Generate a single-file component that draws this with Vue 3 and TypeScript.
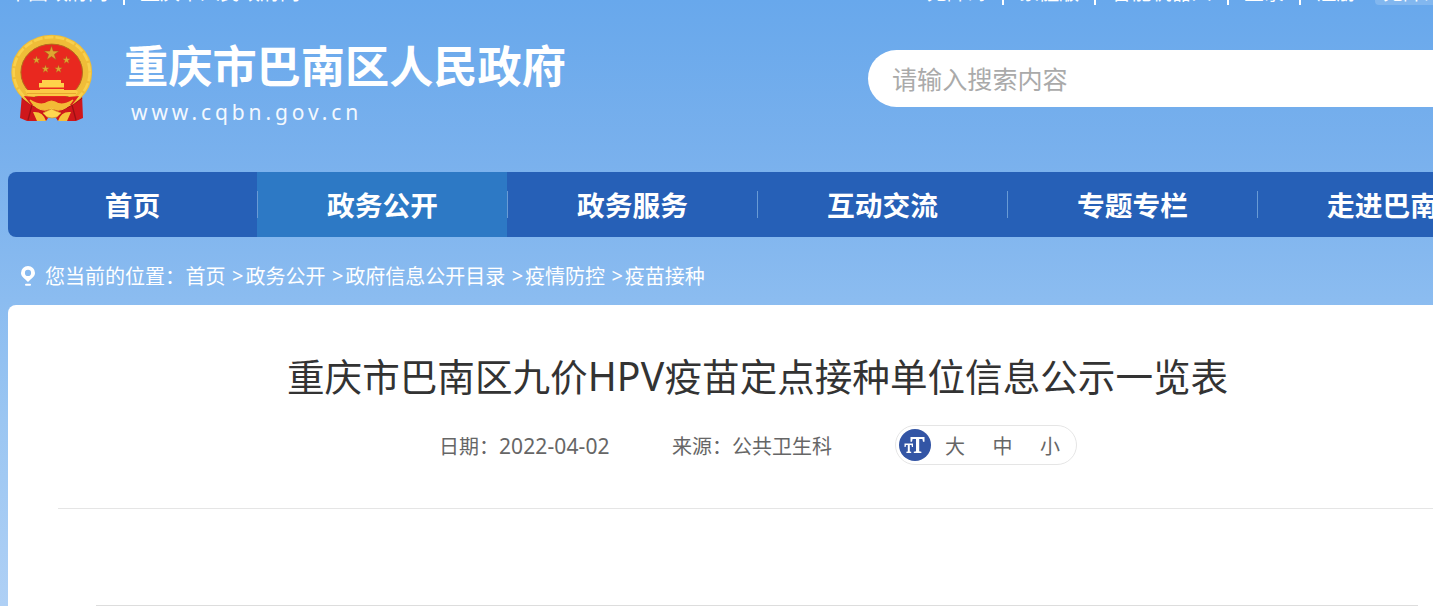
<script setup lang="ts">
interface NavItem { label: string; active?: boolean }

const siteLinks: string[] = ['中国政府网', '重庆市人民政府网']
const tools: string[] = ['无障碍', '繁體版', '智能机器人', '登录', '注册']
const nav: NavItem[] = [
  { label: '首页' },
  { label: '政务公开', active: true },
  { label: '政务服务' },
  { label: '互动交流' },
  { label: '专题专栏' },
  { label: '走进巴南' },
]
const crumbs: string[] = ['首页', '政务公开', '政府信息公开目录', '疫情防控', '疫苗接种']
const sizes: string[] = ['大', '中', '小']
const star = 'M0-10 2.3-3.1 9.5-3.1 3.7 1.2 5.9 8.1 0 3.9-5.9 8.1-3.7 1.2-9.5-3.1-2.3-3.1Z'
</script>

<template>
  <div class="page">
    <div class="topbar">
      <div class="links">
        <template v-for="(l, i) in siteLinks" :key="l">
          <i v-if="i" class="bar"></i><a>{{ l }}</a>
        </template>
      </div>
      <div class="links tools">
        <template v-for="(l, i) in tools" :key="l">
          <i v-if="i" class="bar"></i><a>{{ l }}</a>
        </template>
        <a class="chip">无障碍</a>
      </div>
    </div>

    <header class="header">
      <svg class="emblem" viewBox="0 0 84 90">
        <path d="M12 60 10 84 17 87H36L42 78 48 87H66L73 84 72 60Z" fill="#cf171b" />
        <path d="M12 64 22 71 18 86M72 64 62 71 66 86M22 71 32 76M62 71 52 76" fill="none" stroke="#9c1013" stroke-width="1.3" />
        <path d="M23 78Q33 77 36 87H27ZM61 78Q51 77 48 87H57Z" fill="#f6c13a" />
        <ellipse cx="41.7" cy="38.3" rx="35.6" ry="32.8" fill="#e9281f" stroke="#efbd38" stroke-width="9.6" />
        <ellipse cx="41.7" cy="38.3" rx="38" ry="35.2" fill="none" stroke="#f9d04c" stroke-width="2.6" stroke-dasharray="9 2" />
        <ellipse cx="41.7" cy="38.3" rx="30.8" ry="28.2" fill="#e9281f" stroke="#b4701f" stroke-width="1" />
        <g fill="#dfa531" stroke="#a75719" stroke-width=".7">
          <path :d="star" transform="translate(41.5 19.5) scale(.78)" />
          <path :d="star" transform="translate(26.5 26) scale(.42)" />
          <path :d="star" transform="translate(56.5 26) scale(.42)" />
          <path :d="star" transform="translate(35.5 35) scale(.42)" />
          <path :d="star" transform="translate(48.5 35) scale(.42)" />
        </g>
        <path d="M32 46H51V49H54V53.5H29V49H32Z" fill="#ffd24a" />
        <path d="M30 55H54V56H66L68 58 65 62H18L15 56H30Z" fill="#fbcb45" />
        <path d="M17 59.5H66" stroke="#e49a2b" stroke-width=".8" />
        <path d="M14 62 24 63H59L69 62 62 71H21Z" fill="#dc211c" />
        <path d="M20 66Q31 73 38 68L41.5 67 45 68Q52 73 63 66 56 77 47 76L41.5 73 36 76Q27 77 20 66Z" fill="#f3ba36" stroke="#f3ba36" stroke-width="1.2" />
        <path d="M33 79 37 77 41.5 75 46 77 51 79 47 83 42 84 37 83Z" fill="#ffd750" stroke="#d89a29" stroke-width=".8" />
      </svg>
      <div class="brand">
        <div class="name">重庆市巴南区人民政府</div>
        <div class="url">www.cqbn.gov.cn</div>
      </div>
      <div class="search">请输入搜索内容</div>
    </header>

    <nav class="nav">
      <a v-for="n in nav" :key="n.label" :class="{ active: n.active }">{{ n.label }}</a>
    </nav>

    <div class="crumbs">
      <svg class="pin" viewBox="0 0 16 20">
        <path fill-rule="evenodd" d="M8 0A7 7 0 0 0 1 7C1 10.5 4.5 12.5 8 16 11.5 12.5 15 10.5 15 7A7 7 0 0 0 8 0ZM8 3.8A3.1 3.1 0 1 1 8 10 3.1 3.1 0 0 1 8 3.8Z" fill="#fff" />
        <rect x="5" y="17.8" width="6" height="2" rx="1" fill="#fff" />
      </svg>
      <span class="where">您当前的位置：</span>
      <template v-for="(c, i) in crumbs" :key="c">
        <span v-if="i" class="gt">&gt;</span><a>{{ c }}</a>
      </template>
    </div>

    <main class="card">
      <h1>重庆市巴南区九价<span class="latin">HPV</span>疫苗定点接种单位信息公示一览表</h1>
      <div class="meta">
        <span class="date">日期：<span class="num">2022-04-02</span></span>
        <span class="source">来源：公共卫生科</span>
        <div class="sizer">
          <svg viewBox="0 0 32 32" class="tt">
            <circle cx="16" cy="16" r="16" fill="#3355a5" />
            <path d="M11.5 8H25.5V12.8H24L23.4 10H20.2V22.2L22.4 22.7V24H14.8V22.7L17 22.2V10H13.6L13 12.8H11.5Z" fill="#fff" />
            <path d="M5.5 14.5H14V18H12.9L12.5 16H10.8V22.4L12.2 22.8V24H7.4V22.8L8.8 22.4V16H7L6.6 18H5.5Z" fill="#fff" />
          </svg>
          <a v-for="s in sizes" :key="s">{{ s }}</a>
        </div>
      </div>
      <div class="rule"></div>
      <div class="table-edge"></div>
    </main>
  </div>
</template>

<style>
html, body { overflow: hidden; }
</style>

<style scoped>
.page {
  width: 1433px;
  height: 606px;
  overflow: hidden;
  background: linear-gradient(#68a8ec 0, #6caaec 40px, #7ab1ed 165px, #8bbcf0 300px, #9bc6f2 420px, #afd0f5 606px);
  font-family: "Noto Sans CJK SC", sans-serif;
  color: #fff;
  white-space: nowrap;
}
.topbar {
  display: flex;
  height: 34px;
  padding-left: 8px;
  overflow: hidden;
}
.links {
  display: flex;
  flex: none;
  margin-top: -17px;
  height: 22px;
  font-size: 20px;
  line-height: 17px;
}
.bar { width: 2px; height: 17px; margin: 5px 15px 0; background: #fff; }
.tools { margin-left: 627px; }
.tools .bar { margin-right: 15.3px; }
.chip {
  height: 22px;
  margin-left: 19px;
  padding: 0 8px;
  border-radius: 4px;
  background: #82b7ef;
}
.header { display: flex; height: 138px; }
.emblem { width: 84px; height: 90px; margin: 0 0 0 10px; flex: none; }
.brand { width: 744px; margin-left: 30px; flex: none; }
.name {
  height: 61px;
  font-size: 44.2px;
  line-height: 61px;
  font-weight: 700;
}
.url {
  margin: 3px 0 0 7px;
  font: 21px/28px "Noto Sans", sans-serif;
  letter-spacing: 3.9px;
  color: #f3f8fe;
}
.search {
  box-sizing: border-box;
  width: 600px;
  height: 57px;
  margin-top: 16px;
  padding-left: 24px;
  flex: none;
  border-radius: 29px;
  background: #fff;
  color: #aaa;
  font-size: 25.1px;
  line-height: 57px;
}
.nav {
  display: flex;
  width: 1500px;
  height: 65px;
  margin-left: 8px;
  border-radius: 8px;
  overflow: hidden;
  background: #2660b7;
}
.nav a {
  position: relative;
  box-sizing: border-box;
  width: 250px;
  padding-left: 1px;
  flex: none;
  font-size: 27.7px;
  font-weight: 700;
  line-height: 64px;
  text-align: center;
}
.nav a:first-child { width: 249px; padding-left: 0; }
.nav a.active { background: #2d79c5; }
.nav a + a::before {
  content: "";
  position: absolute;
  left: 0;
  top: 19px;
  width: 1px;
  height: 27px;
  background: #699bd5;
}
.crumbs {
  display: flex;
  height: 68px;
  padding-left: 20px;
  font-size: 20px;
  line-height: 77px;
}
.pin { width: 16px; height: 20px; margin: 29px 9px 0 0; }
.gt { width: 13.3px; margin-left: 6.5px; font-family: "Noto Sans", sans-serif; }
.where { margin-right: .6px; }
.card {
  height: 301px;
  margin-left: 8px;
  border-radius: 8px 0 0;
  overflow: hidden;
  background: #fff;
  color: #333;
}
h1 {
  margin: 42px 0 0 279px;
  font-size: 37.6px;
  font-weight: 400;
  line-height: 56px;
  height: 58px;
}
.latin { font-family: "Noto Sans", sans-serif; font-size: 39.2px; letter-spacing: .2px; line-height: 1; }
.meta {
  display: flex;
  height: 40px;
  margin: 20px 0 0 431px;
  color: #666;
  font-size: 20px;
  line-height: 41px;
}
.date { width: 233px; }
.num { font-family: "Noto Sans", sans-serif; font-size: 21px; letter-spacing: .1px; line-height: 1; }
.source { width: 223px; }
.sizer {
  box-sizing: border-box;
  display: flex;
  width: 182px;
  height: 40px;
  padding-left: 3px;
  border: 1px solid #e5e5e5;
  border-radius: 20px;
  line-height: 39px;
}
.tt { width: 32px; height: 32px; margin: 3px 14px 0 0; flex: none; }
.sizer a { width: 47.5px; flex: none; }
.rule { height: 1px; margin: 43px 0 0 50px; background: #e5e5e5; }
.table-edge { width: 1322px; height: 1px; margin: 96px 0 0 88px; background: #ddd; }
</style>
